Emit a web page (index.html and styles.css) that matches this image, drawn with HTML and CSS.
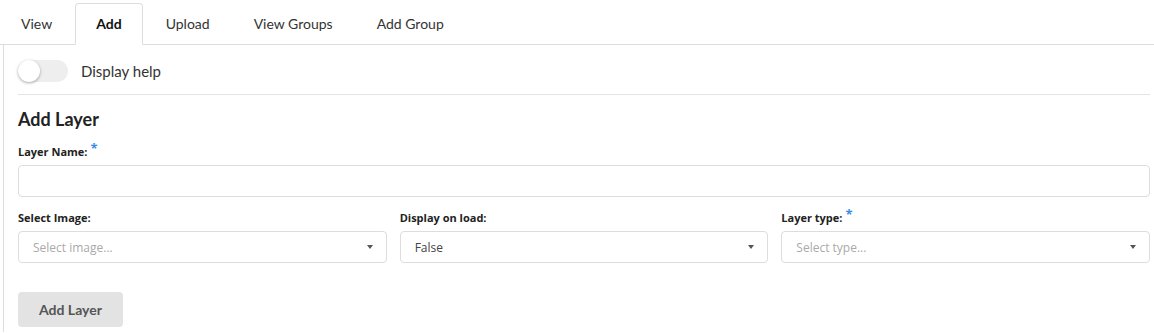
FILE: index.html
```html
<!DOCTYPE html>
<html lang="en">
    <head>
        <meta charset="UTF-8">
        <meta name="viewport" content="width=device-width, initial-scale=1.0">
        <title>Add Layer</title>
        <link rel="stylesheet" href="styles.css">
    </head>
    <body>
        <ul class="Tabs">
            <li class="Tab">View</li>
            <li class="Tab Active">Add</li>
            <li class="Tab">Upload</li>
            <li class="Tab">View Groups</li>
            <li class="Tab">Add Group</li>
        </ul>
        <div class="Panel">
            <div class="Help">
                <span class="Switch"><span class="Knob"></span></span>
                <span class="HelpText">Display help</span>
            </div>
            <hr class="Rule">
            <h3 class="Title">Add Layer</h3>
            <label class="Label">Layer Name:<sup class="Req">*</sup></label>
            <div class="Input"></div>
            <div class="Row">
                <div class="Field">
                    <label class="Label">Select Image:</label>
                    <div class="Select Empty">Select image...<span class="Caret"></span></div>
                </div>
                <div class="Field">
                    <label class="Label">Display on load:</label>
                    <div class="Select">False<span class="Caret"></span></div>
                </div>
                <div class="Field">
                    <label class="Label">Layer type:<sup class="Req">*</sup></label>
                    <div class="Select Empty">Select type...<span class="Caret"></span></div>
                </div>
            </div>
            <button class="Button">Add Layer</button>
        </div>
    </body>
</html>
```

FILE: styles.css
```css
* {
    box-sizing: border-box;
}
body {
    background-color: #FFFFFF;
    color: #333333;
    font-family: Lato, "Open Sans", sans-serif;
    margin: 0px;
}
.Tabs {
    border-bottom: 1px solid #DDDDDD;
    display: flex;
    list-style: none;
    margin: 3px 0px 0px 0px;
    padding: 0px;
}
.Tab {
    border: 1px solid transparent;
    border-radius: 4px 4px 0px 0px;
    color: #333333;
    font-size: 14px;
    line-height: 20px;
    margin: 0px 2px -1px 0px;
    padding: 10px 20px;
}
.Tab.Active {
    background-color: #FFFFFF;
    border-color: #DDDDDD #DDDDDD #FFFFFF;
    color: #111111;
    font-weight: 700;
}
.Panel {
    border-left: 1px solid #DDDDDD;
    margin-left: 3px;
    padding: 15px 4px 5px 14px;
}
.Help {
    align-items: center;
    display: flex;
    height: 22px;
}
.Switch {
    background-color: #EEEEEE;
    border-radius: 11px;
    display: block;
    height: 22px;
    width: 50px;
}
.Knob {
    background-color: #FFFFFF;
    border-radius: 50%;
    box-shadow: 0px 1px 3px rgba(0, 0, 0, 0.35);
    display: block;
    height: 22px;
    width: 22px;
}
.HelpText {
    color: #333333;
    font-size: 15px;
    margin-left: 13px;
}
.Rule {
    border: none;
    border-top: 1px solid #E5E5E5;
    margin: 12px 0px 0px 0px;
}
.Title {
    color: #222222;
    font-size: 18px;
    font-weight: 700;
    line-height: 24px;
    margin: 12px 0px 13px 0px;
}
.Label {
    color: #222222;
    display: block;
    font-family: "Open Sans", sans-serif;
    font-size: 11px;
    font-weight: 700;
    line-height: 16px;
    margin-bottom: 5px;
}
.Req {
    color: #3A8EE6;
    font-size: 13px;
    line-height: 0px;
    margin-left: 3px;
    vertical-align: 3px;
}
.Input {
    border: 1px solid #DDDDDD;
    border-radius: 4px;
    height: 32px;
}
.Row {
    display: grid;
    gap: 13px;
    grid-template-columns: 1fr 1fr 1fr;
    margin-top: 13px;
}
.Select {
    align-items: center;
    border: 1px solid #DDDDDD;
    border-radius: 4px;
    color: #444444;
    display: flex;
    font-family: "Open Sans", sans-serif;
    font-size: 12px;
    height: 32px;
    justify-content: space-between;
    padding: 0px 13px 0px 14px;
}
.Select.Empty {
    color: #AAAAAA;
}
.Caret {
    border-left: 3px solid transparent;
    border-right: 3px solid transparent;
    border-top: 4px solid #555555;
    display: block;
    height: 0px;
    width: 0px;
}
.Button {
    background-color: #E3E3E3;
    border: none;
    border-radius: 4px;
    color: #555555;
    font-family: Lato, sans-serif;
    font-size: 14px;
    font-weight: 700;
    height: 35px;
    margin-top: 29px;
    padding: 0px 21px;
}
```
